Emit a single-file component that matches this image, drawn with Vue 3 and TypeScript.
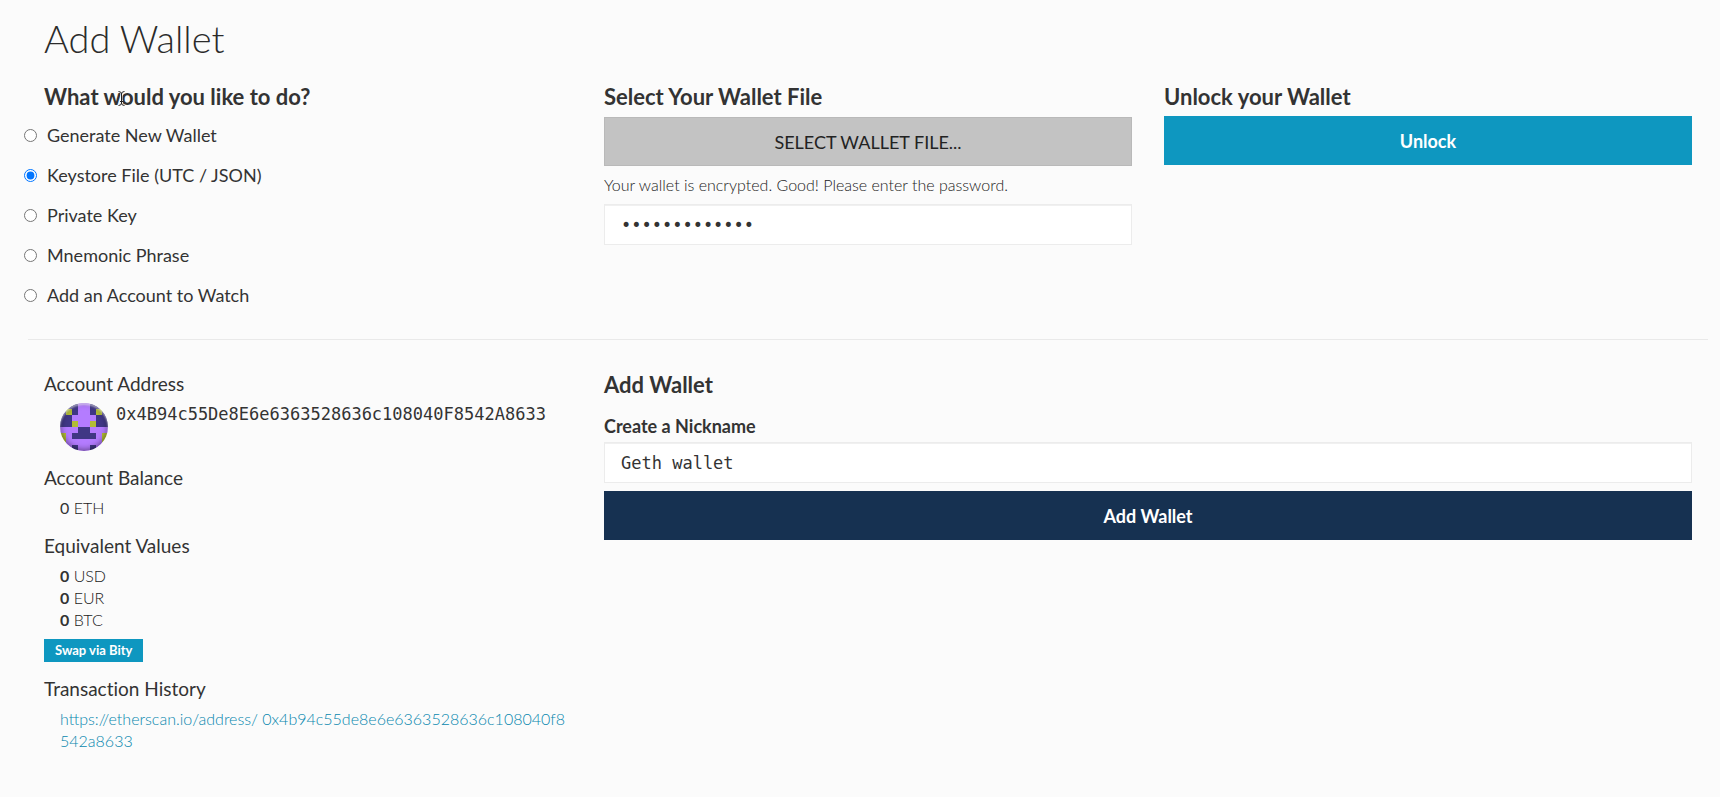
<script setup lang="ts">
import { ref } from 'vue'

interface Option {
  id: string
  label: string
}

const options: Option[] = [
  { id: 'generate', label: 'Generate New Wallet' },
  { id: 'keystore', label: 'Keystore File (UTC / JSON)' },
  { id: 'private-key', label: 'Private Key' },
  { id: 'mnemonic', label: 'Mnemonic Phrase' },
  { id: 'watch', label: 'Add an Account to Watch' },
]

const selected = ref('keystore')
const password = ref('keystore-pass')
const nickname = ref('Geth wallet')
const equivalents = ['USD', 'EUR', 'BTC']

// Identicon rows: p = purple, d = indigo, y = olive
const identicon = [
  'dddppddd',
  'dydppdyd',
  'ddppppdd',
  'ddyppydd',
  'pppddppp',
  'ypddddpy',
  'yppppppy',
  'ppdppdpp',
]
const cells = identicon.flatMap((row, y) =>
  [...row].map((tone, x) => ({ tone, x, y })),
)
</script>

<template>
  <main class="page">
    <h1>Add Wallet</h1>

    <div class="grid">
      <fieldset class="options">
        <legend class="heading question">
          What would you like to do?
          <svg class="caret" viewBox="0 0 9 17" aria-hidden="true">
            <path class="halo" d="M1.5 1.5Q4.5 1.5 4.5 4Q4.5 1.5 7.5 1.5M4.5 3.5V13.5M1.5 15.5Q4.5 15.5 4.5 13Q4.5 15.5 7.5 15.5M3 11.5H6" />
            <path class="ink" d="M1.5 1.5Q4.5 1.5 4.5 4Q4.5 1.5 7.5 1.5M4.5 3.5V13.5M1.5 15.5Q4.5 15.5 4.5 13Q4.5 15.5 7.5 15.5M3 11.5H6" />
          </svg>
        </legend>
        <label v-for="o in options" :key="o.id" class="option">
          <input v-model="selected" type="radio" name="method" :value="o.id" />
          <span>{{ o.label }}</span>
        </label>
      </fieldset>

      <section>
        <h2 class="heading">Select Your Wallet File</h2>
        <button type="button" class="btn btn-file">SELECT WALLET FILE...</button>
        <label class="hint" for="password">Your wallet is encrypted. Good! Please enter the password.</label>
        <input id="password" v-model="password" class="field" type="password" />
      </section>

      <section>
        <h2 class="heading">Unlock your Wallet</h2>
        <button type="button" class="btn btn-primary">Unlock</button>
      </section>
    </div>

    <hr />

    <div class="grid">
      <section class="account">
        <h3>Account Address</h3>
        <div class="address">
          <span class="identicon">
            <svg viewBox="0 0 48 48" shape-rendering="crispEdges" aria-hidden="true">
              <rect v-for="c in cells" :key="c.x + '-' + c.y" :class="c.tone" :x="c.x * 6" :y="c.y * 6" width="6" height="6" />
            </svg>
          </span>
          <span class="mono">0x4B94c55De8E6e6363528636c108040F8542A8633</span>
        </div>

        <h3>Account Balance</h3>
        <ul>
          <li><span class="amount">0</span> ETH</li>
        </ul>

        <h3>Equivalent Values</h3>
        <ul class="values">
          <li v-for="unit in equivalents" :key="unit"><b class="amount">0</b> {{ unit }}</li>
        </ul>
        <a class="swap" href="#swap">Swap via Bity</a>

        <h3>Transaction History</h3>
        <ul>
          <li><a class="link" href="#history">https://etherscan.io/address/ 0x4b94c55de8e6e6363528636c108040f8542a8633</a></li>
        </ul>
      </section>

      <section class="create">
        <h2 class="heading">Add Wallet</h2>
        <label class="name-label" for="nickname">Create a Nickname</label>
        <input id="nickname" v-model="nickname" class="field" type="text" />
        <button type="button" class="btn btn-navy">Add Wallet</button>
      </section>
    </div>
  </main>
</template>

<style>
body {
  margin: 0;
  background: #fbfbfb;
}
</style>

<style scoped>
* {
  box-sizing: border-box;
}
.page {
  padding: 14px 28px 32px 44px;
  font-family: Lato, "Liberation Sans", sans-serif;
  font-size: 16px;
  line-height: 22px;
  font-weight: 300;
  color: #1a1a1a;
}
h1 {
  margin: 0 0 18px;
  color: #2b2b2b;
  font-size: 38px;
  line-height: 48px;
  font-weight: 300;
}
.grid {
  display: grid;
  grid-template-columns: repeat(3, minmax(0, 1fr));
  column-gap: 32px;
}
.heading {
  margin: 0 0 2px;
  padding: 0;
  color: #333;
  font-size: 22px;
  line-height: 34px;
  font-weight: 700;
}
.question {
  position: relative;
  margin-bottom: 1px;
}
.options {
  margin: 0;
  padding: 0;
  border: 0;
  min-width: 0;
}
.option {
  display: flex;
  align-items: center;
  gap: 10px;
  height: 40px;
  margin-left: -20px;
  color: #333;
  font-size: 18px;
  font-weight: 400;
}
.option input {
  width: 13px;
  height: 13px;
  margin: 0;
}
.caret {
  position: absolute;
  top: 10px;
  left: 73px;
  width: 9px;
  height: 17px;
  fill: none;
}
.halo {
  stroke: #fff;
  stroke-width: 2;
}
.ink {
  stroke: #222;
  stroke-width: 1;
}
.btn {
  display: block;
  width: 100%;
  height: 49px;
  padding: 0;
  border: 0;
  font-family: inherit;
  font-size: 18px;
  line-height: 24px;
  font-weight: 700;
  color: #fff;
  cursor: pointer;
}
.btn-file {
  margin-top: 3px;
  border: 1px solid #b9b9b9;
  background: #c3c3c3;
  color: #222;
  font-weight: 400;
}
.btn-primary {
  background: #0e97c0;
}
.btn-navy {
  margin-top: 8px;
  background: #163151;
}
.hint {
  display: block;
  margin: 8px 0;
}
.field {
  display: block;
  width: 100%;
  height: 41px;
  padding: 0 16px;
  border: 1px solid #ececec;
  border-radius: 0;
  outline: 0;
  background: #fff;
  box-shadow: inset 0 1px 0 #f0f0f0;
  color: #333;
  font-family: "DejaVu Sans Mono", monospace;
  font-size: 17px;
}
hr {
  height: 1px;
  margin: 24px -16px 28px;
  border: 0;
  background: #e9e9e9;
}
h3 {
  margin: 0;
  color: #333;
  font-size: 19px;
  line-height: 32px;
  font-weight: 400;
  font-variant-ligatures: none;
}
.address {
  display: flex;
  gap: 8px;
  margin: 3px 0 11px 16px;
}
.identicon {
  position: relative;
  flex: none;
  width: 48px;
  height: 48px;
  border-radius: 50%;
  overflow: hidden;
}
.identicon svg {
  display: block;
}
.identicon::after {
  content: "";
  position: absolute;
  inset: 0;
  border-radius: 50%;
  box-shadow: inset 0 2px 2px rgba(255, 255, 255, 0.5), inset 0 -1px 6px rgba(0, 0, 0, 0.5);
}
.p {
  fill: #b47cff;
}
.d {
  fill: #403785;
}
.y {
  fill: #b2bd35;
}
.mono {
  color: #333;
  font-family: "DejaVu Sans Mono", monospace;
  font-size: 17px;
  font-weight: 400;
}
ul {
  margin: 3px 0 11px;
  padding: 0 0 0 16px;
  list-style: none;
}
li {
  word-break: break-all;
}
.amount {
  color: #333;
  font-weight: 400;
}
b.amount {
  font-weight: 700;
}
.values {
  margin-bottom: 8px;
}
.swap {
  display: block;
  width: fit-content;
  margin-bottom: 11px;
  padding: 0 11px;
  background: #0e97c0;
  color: #fff;
  font-size: 13px;
  line-height: 23px;
  font-weight: 700;
  text-decoration: none;
}
.link {
  color: #0787ae;
  text-decoration: none;
}
.create {
  grid-column: span 2;
}
.name-label {
  display: block;
  margin: 12px 0 4px;
  color: #333;
  font-size: 18px;
  line-height: 24px;
  font-weight: 700;
}
</style>
